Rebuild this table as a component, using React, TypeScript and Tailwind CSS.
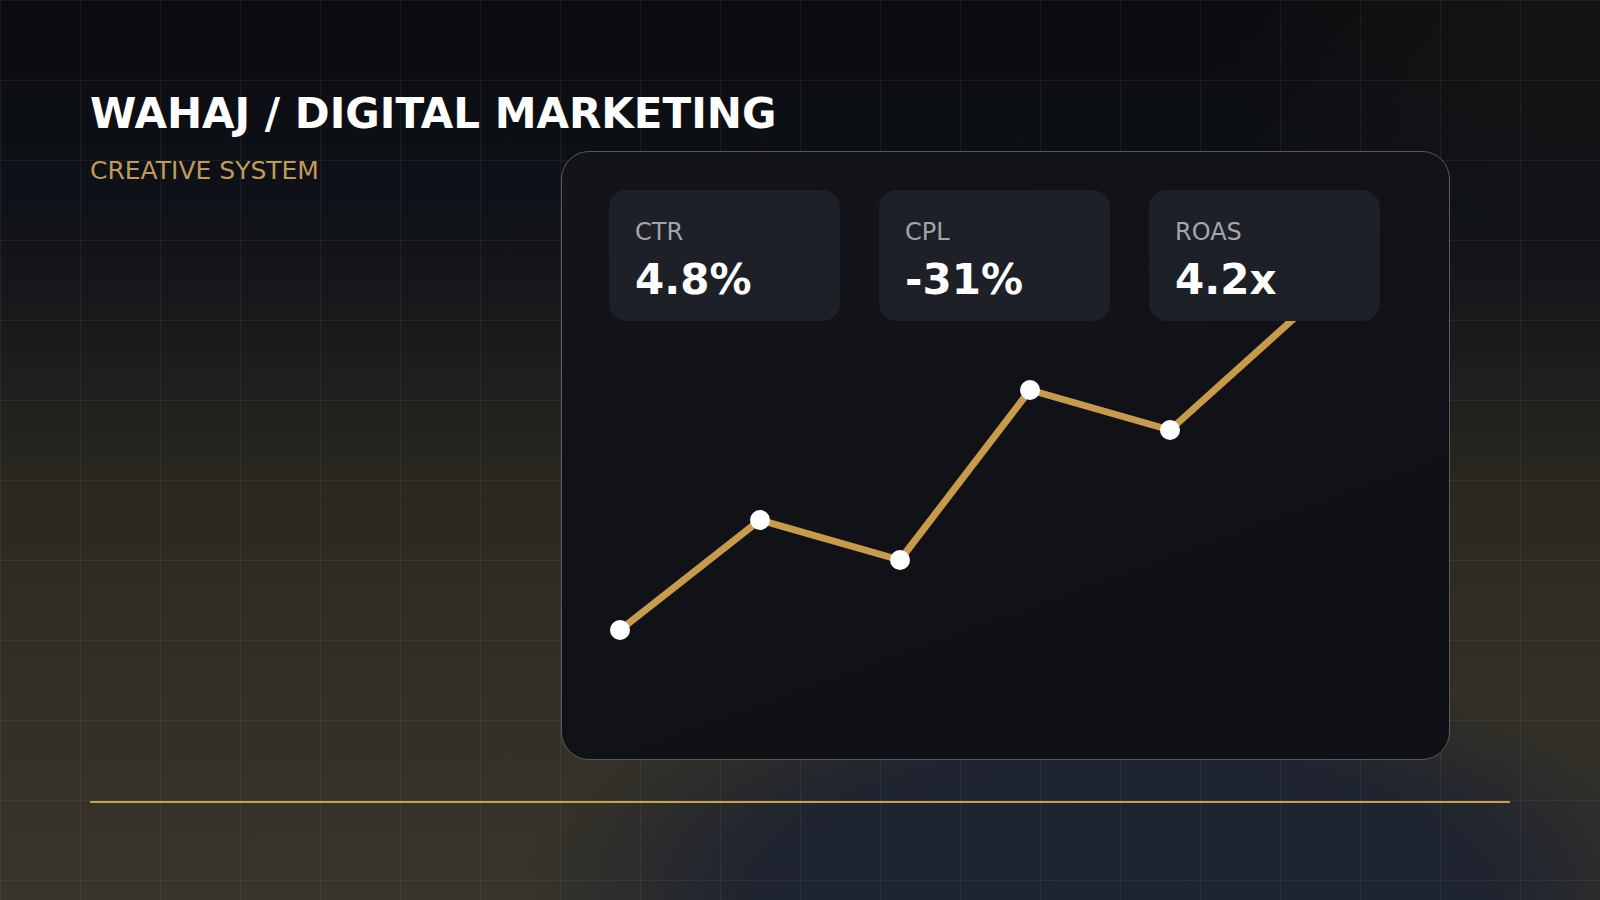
import React from 'react';

const stats = [
  { label: 'CTR', value: '4.8%' },
  { label: 'CPL', value: '-31%' },
  { label: 'ROAS', value: '4.2x' },
];

// chart points, in card pixels
const points: [number, number][] = [
  [58, 478],
  [198, 368],
  [338, 408],
  [468, 238],
  [608, 278],
  [748, 152],
];

function Chart() {
  const d = points.map(([x, y], i) => `${i === 0 ? 'M' : 'L'}${x} ${y}`).join(' ');
  return (
    <svg className="absolute inset-0 h-full w-full" viewBox="0 0 887 607" preserveAspectRatio="none">
      <path d={d} fill="none" stroke="#c89a4b" strokeWidth="7" strokeLinejoin="round" strokeLinecap="round" />
      {points.map(([x, y]) => (
        <circle key={x} cx={x} cy={y} r="10" fill="#ffffff" />
      ))}
    </svg>
  );
}

export default function App() {
  return (
    <div className="relative h-[900px] w-full overflow-hidden bg-[#0b0d12] font-['DejaVu_Sans',sans-serif]">
      {/* backdrop */}
      <div className="pointer-events-none absolute inset-0 [background-image:radial-gradient(ellipse_42%_30%_at_70%_100%,rgba(29,35,48,1)_0%,rgba(29,35,48,0.95)_55%,transparent_90%),radial-gradient(ellipse_25%_30%_at_100%_0%,rgba(40,36,24,0.35),transparent_100%),linear-gradient(to_bottom,#0a0c10_0%,#0e1117_22%,#1a1b1c_38%,#2b2820_55%,#332f26_75%,#38342a_100%)]" />
      {/* grid */}
      <div className="pointer-events-none absolute inset-0 [background-image:linear-gradient(to_right,rgba(255,255,255,0.055)_1px,transparent_1px),linear-gradient(to_bottom,rgba(255,255,255,0.055)_1px,transparent_1px)] [background-size:80px_80px]" />

      <div className="relative flex flex-col px-[90px] pt-[90px]">
        <div className="grid grid-cols-[471px_889px]">
          <div className="whitespace-nowrap">
            <h1 className="text-[42px] font-bold leading-[1.164] text-white">WAHAJ / DIGITAL MARKETING</h1>
            <p className="mt-[17px] text-[25px] leading-[1.164] text-[#c29a58]">CREATIVE SYSTEM</p>
          </div>

          <div className="relative mt-[61px] h-[609px] overflow-hidden rounded-[28px] border border-[#565a62] bg-[linear-gradient(160deg,#131419,#0f1014)]">
            <Chart />
            <div className="relative z-10 grid w-[818px] grid-cols-3 gap-[39px] pl-[47px] pt-[38px]">
              {stats.map((s) => (
                <div key={s.label} className="h-[131px] rounded-[18px] bg-[#1e2027] pl-[26px] pr-6 pt-[29px]">
                  <div className="text-[24px] leading-[1.164] text-[#a3a5ad]">{s.label}</div>
                  <div className="mt-[9px] text-[42px] font-bold leading-[1.164] text-white">{s.value}</div>
                </div>
              ))}
            </div>
          </div>
        </div>

        <div className="mt-[41px] h-[2px] w-full bg-[#c9a04c]" />
      </div>
    </div>
  );
}
